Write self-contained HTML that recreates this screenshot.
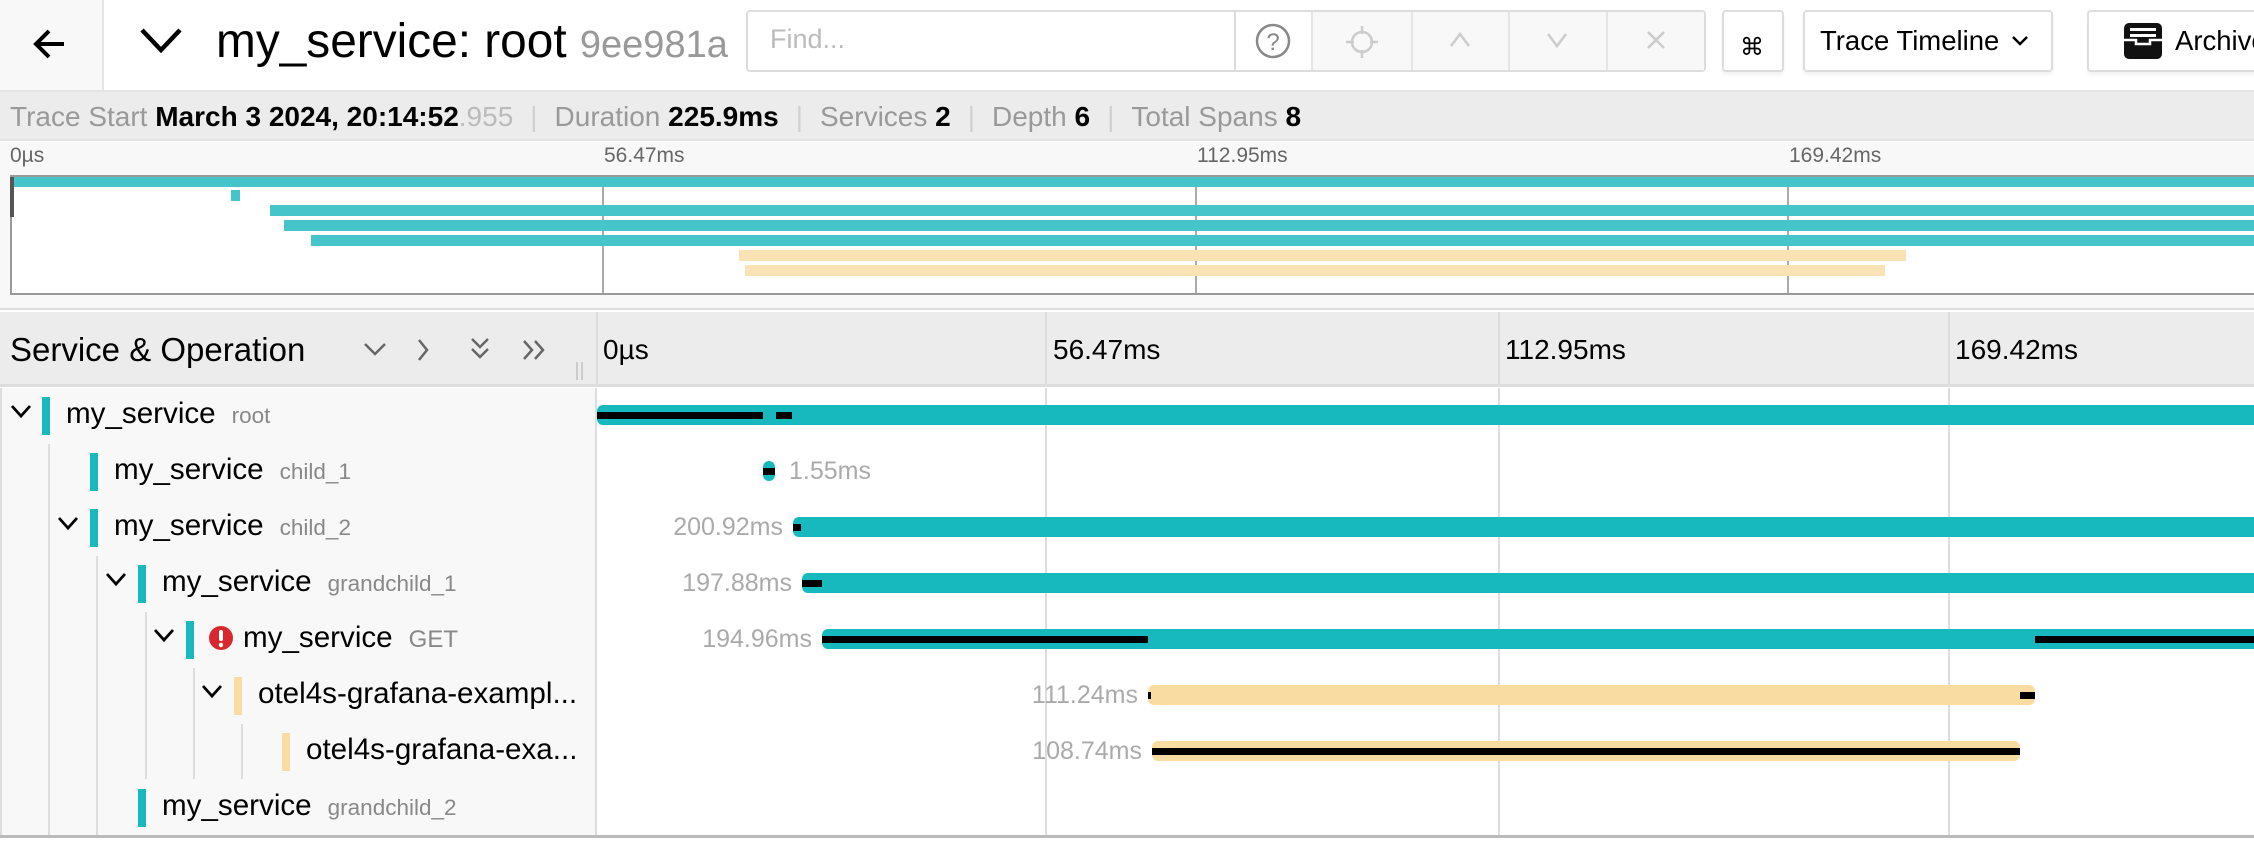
<!DOCTYPE html>
<html><head><meta charset="utf-8"><style>
*{box-sizing:border-box;margin:0;padding:0}
body{width:2254px;height:854px;overflow:hidden;background:#fff;font-family:"Liberation Sans",sans-serif;position:relative;color:#000}
.a{position:absolute}
.btn{position:absolute;border:2px solid #ddd;border-radius:4px;background:#fff;box-shadow:0 3px 3px rgba(0,0,0,.05)}
.g{color:#999}
.sep{color:#d0d0d0;margin:0 17px}
.bar{position:absolute;height:20px;border-radius:6px}
.bl{position:absolute;height:7px;background:#000;top:6.5px}
.lbl{position:absolute;font-size:25px;color:#aaa;line-height:28px;white-space:nowrap}
.lr{text-align:right;width:200px}
.row{position:absolute;left:0;width:597px;height:56px}
.cb{position:absolute;width:8px;height:38px;top:9px}
.nm{position:absolute;font-size:29.6px;line-height:56px;top:-2px;white-space:nowrap}
.op{font-size:22.5px;color:#888;margin-left:16px}
.chev{position:absolute;top:14px}
.vg{position:absolute;width:2px;background:#ddd}
</style></head><body>

<div class="a" style="left:0;top:0;width:104px;height:92px;background:#f8f8f8;border-right:2px solid #e5e5e5;border-bottom:2px solid #e5e5e5"></div>
<svg class="a" style="left:30px;top:24px" width="40" height="40" viewBox="0 0 40 40"><path d="M34 20H7M19 7L6 20l13 13" fill="none" stroke="#000" stroke-width="4"/></svg>
<div class="a" style="left:104px;top:90px;width:2150px;height:2px;background:#e5e5e5"></div>
<svg class="a" style="left:138px;top:26px" width="46" height="30" viewBox="0 0 46 30"><path d="M4 4l19 20L42 4" fill="none" stroke="#000" stroke-width="4.5"/></svg>
<div class="a" style="left:216px;top:13px;font-size:47.8px;line-height:58px;white-space:nowrap">my_service: root <span class="g" style="font-size:38px">9ee981a</span></div>

<div class="btn" style="left:746px;top:10px;width:960px;height:62px;box-shadow:none"></div>
<div class="a" style="left:770px;top:24px;font-size:27px;color:#bbb">Find...</div>
<div class="a" style="left:1234px;top:12px;width:2px;height:58px;background:#ddd"></div>
<svg class="a" style="left:1254px;top:22px" width="38" height="38" viewBox="0 0 38 38"><circle cx="19" cy="19" r="16" fill="none" stroke="#888" stroke-width="2.5"/><text x="19" y="28" font-size="24" text-anchor="middle" fill="#888" font-family="Liberation Sans">?</text></svg>
<div class="a" style="left:1312px;top:12px;width:392px;height:58px;background:#f8f8f8"></div>
<div class="a" style="left:1311px;top:12px;width:2px;height:58px;background:#e5e5e5"></div>
<div class="a" style="left:1411px;top:12px;width:2px;height:58px;background:#e5e5e5"></div>
<div class="a" style="left:1508px;top:12px;width:2px;height:58px;background:#e5e5e5"></div>
<div class="a" style="left:1606px;top:12px;width:2px;height:58px;background:#e5e5e5"></div>
<svg class="a" style="left:1344px;top:24px" width="36" height="36" viewBox="0 0 36 36"><circle cx="18" cy="18" r="10" fill="none" stroke="#ccc" stroke-width="2.5"/><path d="M18 2v8M18 26v8M2 18h8M26 18h8" stroke="#ccc" stroke-width="2.5"/></svg>
<svg class="a" style="left:1448px;top:30px" width="24" height="20" viewBox="0 0 24 20"><path d="M3 16l9-12 9 12" fill="none" stroke="#ccc" stroke-width="2.5"/></svg>
<svg class="a" style="left:1545px;top:30px" width="24" height="20" viewBox="0 0 24 20"><path d="M3 4l9 12 9-12" fill="none" stroke="#ccc" stroke-width="2.5"/></svg>
<svg class="a" style="left:1644px;top:28px" width="24" height="24" viewBox="0 0 24 24"><path d="M4 4l16 16M20 4L4 20" fill="none" stroke="#ccc" stroke-width="2.5"/></svg>

<div class="btn" style="left:1722px;top:10px;width:62px;height:62px"></div>
<div class="a" style="left:1740px;top:33px;font-size:24px">⌘</div>
<div class="btn" style="left:1803px;top:10px;width:250px;height:62px"></div>
<div class="a" style="left:1820px;top:25px;font-size:27.5px">Trace Timeline</div>
<svg class="a" style="left:2010px;top:34px" width="20" height="14" viewBox="0 0 20 14"><path d="M3 3l7 7 7-7" fill="none" stroke="#000" stroke-width="2.5"/></svg>
<div class="btn" style="left:2087px;top:10px;width:200px;height:62px"></div>
<svg class="a" style="left:2122px;top:22px" width="42" height="38" viewBox="0 0 42 38"><rect x="2" y="1" width="38" height="36" rx="5" fill="#111"/><rect x="8" y="6" width="26" height="3" fill="#fff"/><rect x="8" y="12" width="26" height="3" fill="#fff"/><path d="M2 18h12v4h14v-4h12" fill="none" stroke="#fff" stroke-width="2.5"/></svg>
<div class="a" style="left:2175px;top:25px;font-size:27.5px">Archive</div>

<div class="a" style="left:0;top:92px;width:2254px;height:49px;background:#ececec;border-bottom:2px solid #e0e0e0"></div>
<div class="a" style="left:10px;top:101px;font-size:28px;white-space:nowrap;line-height:32px">
<span class="g">Trace Start</span> <b>March 3 2024, 20:14:52</b><span style="color:#bbb">.955</span><span class="sep">|</span><span class="g">Duration</span> <b>225.9ms</b><span class="sep">|</span><span class="g">Services</span> <b>2</b><span class="sep">|</span><span class="g">Depth</span> <b>6</b><span class="sep">|</span><span class="g">Total Spans</span> <b>8</b></div>

<div class="a" style="left:0;top:142px;width:2254px;height:168px;background:#f8f8f8;border-bottom:2px solid #ddd"></div>
<div class="a" style="left:10px;top:144px;font-size:21px;color:#666">0µs</div>
<div class="a" style="left:604px;top:144px;font-size:21px;color:#666">56.47ms</div>
<div class="a" style="left:1197px;top:144px;font-size:21px;color:#666">112.95ms</div>
<div class="a" style="left:1789px;top:144px;font-size:21px;color:#666">169.42ms</div>
<div class="a" style="left:10px;top:175px;width:2244px;height:120px;background:#fff;border:2px solid #999;border-right:none"></div>
<div class="a" style="left:10px;top:177px;width:4px;height:40px;background:#555"></div>
<div class="a" style="left:602px;top:177px;width:2px;height:116px;background:#aaa"></div>
<div class="a" style="left:1195px;top:177px;width:2px;height:116px;background:#aaa"></div>
<div class="a" style="left:1787px;top:177px;width:2px;height:116px;background:#aaa"></div>
<div class="a" style="left:14px;top:177px;width:2240px;height:10px;background:#45c4ca"></div>
<div class="a" style="left:231px;top:190px;width:9px;height:11px;background:#45c4ca"></div>
<div class="a" style="left:270px;top:205px;width:1984px;height:11px;background:#45c4ca"></div>
<div class="a" style="left:284px;top:220px;width:1970px;height:11px;background:#45c4ca"></div>
<div class="a" style="left:311px;top:235px;width:1943px;height:11px;background:#45c4ca"></div>
<div class="a" style="left:739px;top:250px;width:1167px;height:11px;background:#f9e2b4"></div>
<div class="a" style="left:745px;top:265px;width:1140px;height:11px;background:#f9e2b4"></div>

<div class="a" style="left:0;top:312px;width:2254px;height:75px;background:#ececec;border-bottom:3px solid #ddd"></div>
<div class="a" style="left:10px;top:331px;font-size:33px">Service &amp; Operation</div>
<svg class="a" style="left:362px;top:338px" width="200" height="24" viewBox="0 0 200 24"><g fill="none" stroke="#666" stroke-width="2.5"><path d="M3 6l10 10 10-10"/><path d="M57 2l8 10-8 10"/><path d="M110 1l8 8 8-8M110 11l8 8 8-8"/><path d="M162 3l8 9-8 9M173 3l8 9-8 9"/></g></svg>
<div class="a" style="left:576px;top:362px;width:2px;height:18px;background:#ccc"></div><div class="a" style="left:581px;top:362px;width:2px;height:18px;background:#ccc"></div>
<div class="a" style="left:596px;top:312px;width:2px;height:75px;background:#ddd"></div>
<div class="a" style="left:1045px;top:312px;width:2px;height:75px;background:#ddd"></div>
<div class="a" style="left:1498px;top:312px;width:2px;height:75px;background:#ddd"></div>
<div class="a" style="left:1948px;top:312px;width:2px;height:75px;background:#ddd"></div>
<div class="a" style="left:603px;top:334px;font-size:28px">0µs</div>
<div class="a" style="left:1053px;top:334px;font-size:28px">56.47ms</div>
<div class="a" style="left:1505px;top:334px;font-size:28px">112.95ms</div>
<div class="a" style="left:1955px;top:334px;font-size:28px">169.42ms</div>

<div class="a" style="left:0;top:388px;width:597px;height:448px;background:#f8f8f8;border-left:2px solid #ddd;border-right:2px solid #ddd"></div>
<div class="a" style="left:1045px;top:388px;width:2px;height:448px;background:#ddd"></div>
<div class="a" style="left:1498px;top:388px;width:2px;height:448px;background:#ddd"></div>
<div class="a" style="left:1948px;top:388px;width:2px;height:448px;background:#ddd"></div>
<div class="a" style="left:0;top:835px;width:2254px;height:3px;background:#bbb"></div>

<div class="vg" style="left:48px;top:444px;height:391px"></div>
<div class="vg" style="left:96px;top:556px;height:279px"></div>
<div class="vg" style="left:145px;top:612px;height:167px"></div>
<div class="vg" style="left:193px;top:668px;height:111px"></div>
<div class="vg" style="left:241px;top:724px;height:55px"></div>

<svg width="0" height="0" style="position:absolute"><defs><path id="cv" d="M2 4l9 10 9-10" fill="none" stroke="#000" stroke-width="2.8"/></defs></svg>

<div class="row" style="top:388px">
<svg class="chev" style="left:10px" width="22" height="20"><use href="#cv"/></svg>
<div class="cb" style="left:42px;background:#17b8be"></div>
<div class="nm" style="left:66px">my_service<span class="op">root</span></div></div>
<div class="row" style="top:444px">
<div class="cb" style="left:90px;background:#17b8be"></div>
<div class="nm" style="left:114px">my_service<span class="op">child_1</span></div></div>
<div class="row" style="top:500px">
<svg class="chev" style="left:57px" width="22" height="20"><use href="#cv"/></svg>
<div class="cb" style="left:90px;background:#17b8be"></div>
<div class="nm" style="left:114px">my_service<span class="op">child_2</span></div></div>
<div class="row" style="top:556px">
<svg class="chev" style="left:105px" width="22" height="20"><use href="#cv"/></svg>
<div class="cb" style="left:138px;background:#17b8be"></div>
<div class="nm" style="left:162px">my_service<span class="op">grandchild_1</span></div></div>
<div class="row" style="top:612px">
<svg class="chev" style="left:153px" width="22" height="20"><use href="#cv"/></svg>
<div class="cb" style="left:186px;background:#17b8be"></div>
<svg class="a" style="left:208px;top:13px" width="26" height="26"><circle cx="13" cy="13" r="12" fill="#d8282d"/><rect x="11" y="5" width="4" height="11" rx="2" fill="#fff"/><circle cx="13" cy="20" r="2.2" fill="#fff"/></svg>
<div class="nm" style="left:243px">my_service<span class="op" style="font-size:24px">GET</span></div></div>
<div class="row" style="top:668px">
<svg class="chev" style="left:201px" width="22" height="20"><use href="#cv"/></svg>
<div class="cb" style="left:234px;background:#f8dca1"></div>
<div class="nm" style="left:258px">otel4s-grafana-exampl...</div></div>
<div class="row" style="top:724px">
<div class="cb" style="left:282px;background:#f8dca1"></div>
<div class="nm" style="left:306px">otel4s-grafana-exa...</div></div>
<div class="row" style="top:780px">
<div class="cb" style="left:138px;background:#17b8be"></div>
<div class="nm" style="left:162px">my_service<span class="op">grandchild_2</span></div></div>

<div class="bar" style="left:597px;top:405px;width:1680px;background:#17b8be;border-radius:6px 0 0 6px"><div class="bl" style="left:0;width:166px"></div><div class="bl" style="left:179px;width:16px"></div></div>
<div class="bar" style="left:763px;top:461px;width:12px;background:#17b8be"><div class="bl" style="left:0;width:12px"></div></div>
<div class="lbl" style="left:789px;top:457px">1.55ms</div>
<div class="bar" style="left:793px;top:517px;width:1480px;background:#17b8be;border-radius:6px 0 0 6px"><div class="bl" style="left:0;width:8px"></div></div>
<div class="lbl lr" style="left:583px;top:513px">200.92ms</div>
<div class="bar" style="left:802px;top:573px;width:1480px;background:#17b8be;border-radius:6px 0 0 6px"><div class="bl" style="left:0;width:20px"></div></div>
<div class="lbl lr" style="left:592px;top:569px">197.88ms</div>
<div class="bar" style="left:822px;top:629px;width:1480px;background:#17b8be;border-radius:6px 0 0 6px"><div class="bl" style="left:0;width:326px"></div><div class="bl" style="left:1213px;width:300px"></div></div>
<div class="lbl lr" style="left:612px;top:625px">194.96ms</div>
<div class="bar" style="left:1148px;top:685px;width:887px;background:#f8dca1"><div class="bl" style="left:0;width:3px"></div><div class="bl" style="left:872px;width:15px"></div></div>
<div class="lbl lr" style="left:938px;top:681px">111.24ms</div>
<div class="bar" style="left:1152px;top:741px;width:868px;background:#f8dca1"><div class="bl" style="left:0;width:868px"></div></div>
<div class="lbl lr" style="left:942px;top:737px">108.74ms</div>

</body></html>
